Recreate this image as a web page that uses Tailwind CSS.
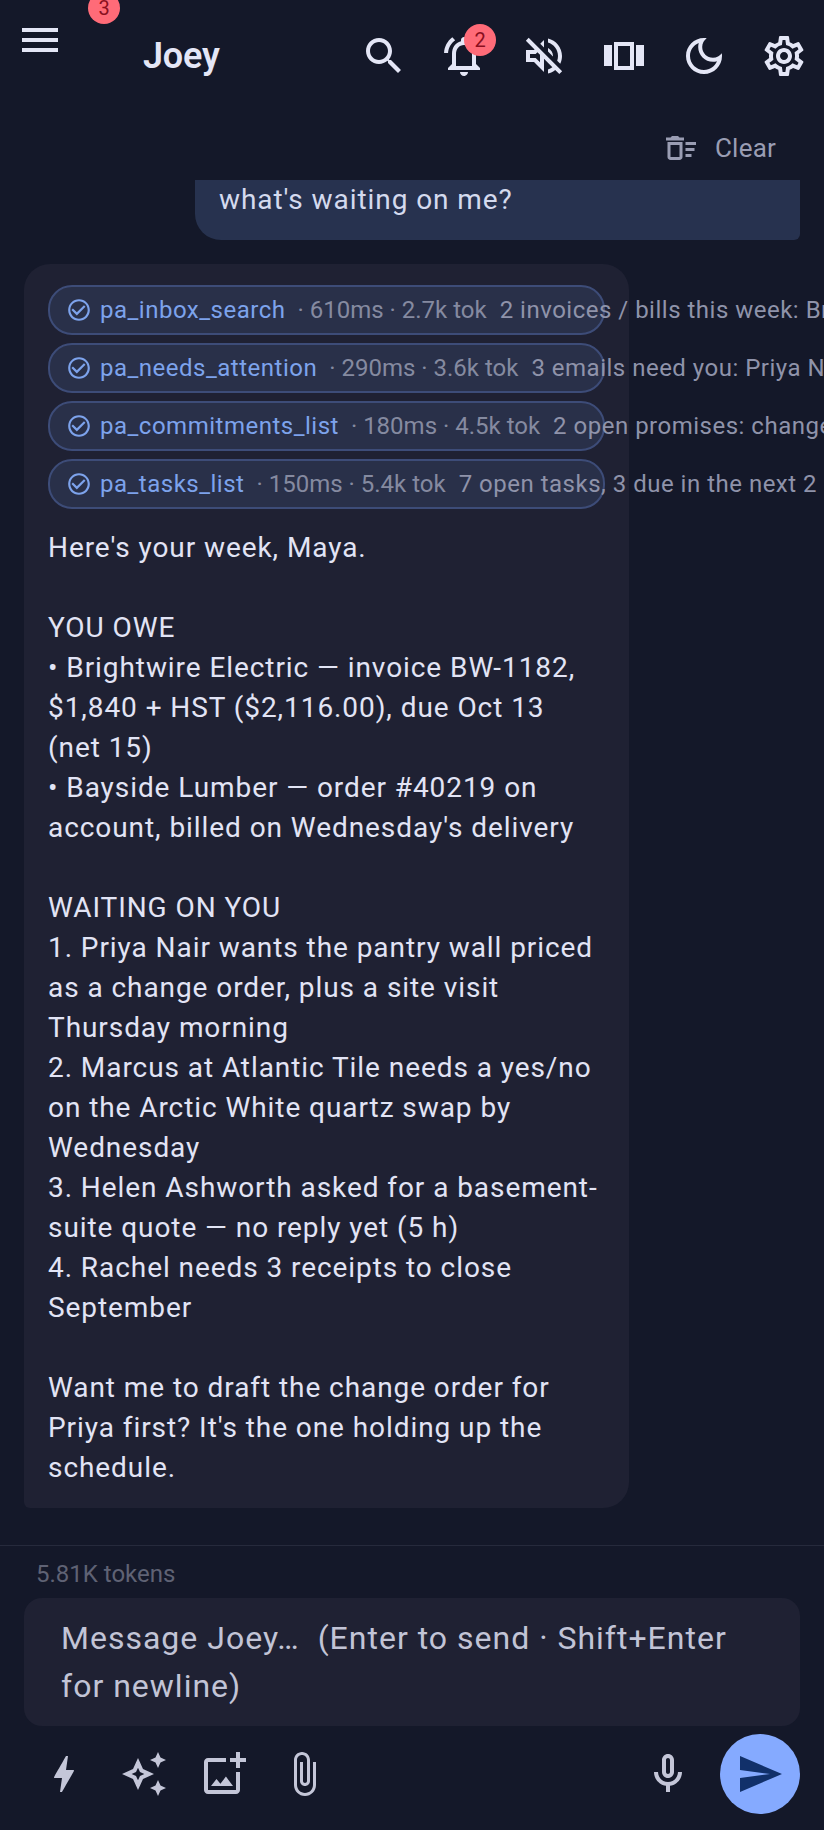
<!doctype html>
<html lang="en">
<head>
<meta charset="utf-8">
<script src="https://cdn.jsdelivr.net/npm/@tailwindcss/browser@4"></script>
</head>
<body class="bg-[#141829]">
<div class="relative w-[824px] h-[1830px] overflow-hidden bg-[#141829] flex flex-col font-['Roboto',sans-serif] text-[#e2e4f5]">

  <header class="relative h-[112px] shrink-0 flex items-start text-[#e4e6f6]">
    <button class="w-[80px] h-[80px] flex items-center justify-center">
      <svg class="w-12 h-12 fill-current" viewBox="0 0 24 24"><path d="M3 18h18v-2H3v2zm0-5h18v-2H3v2zm0-7v2h18V6H3z"/></svg>
    </button>
    <span class="absolute left-[88px] top-[-8px] w-[32px] h-[32px] rounded-full bg-[#ff6b78] text-[#8a0f1e] text-[20px] flex items-center justify-center">3</span>
    <div class="ml-[63px] h-[112px] flex items-center text-[36px] font-semibold tracking-[-0.2px]">Joey</div>
    <div class="ml-auto h-[112px] flex items-center">
      <button class="w-[80px] h-[80px] flex items-center justify-center">
        <svg class="w-12 h-12 fill-current" viewBox="0 0 24 24"><path d="M15.5 14h-.79l-.28-.27C15.41 12.59 16 11.11 16 9.5 16 5.91 13.09 3 9.5 3S3 5.91 3 9.5 5.91 16 9.5 16c1.61 0 3.09-.59 4.23-1.57l.27.28v.79l5 4.99L20.49 19l-4.99-5zm-6 0C7.01 14 5 11.99 5 9.5S7.01 5 9.5 5 14 7.01 14 9.5 11.99 14 9.5 14z"/></svg>
      </button>
      <button class="relative w-[80px] h-[80px] flex items-center justify-center">
        <svg class="w-12 h-12 fill-current" viewBox="0 0 24 24"><path d="M7.58 4.08L6.15 2.65C3.75 4.48 2.17 7.3 2.03 10.5h2c.15-2.65 1.51-4.97 3.55-6.42zm12.39 6.42h2c-.15-3.2-1.73-6.02-4.12-7.85l-1.42 1.43c2.02 1.45 3.39 3.77 3.54 6.42zM18 11c0-3.07-1.64-5.64-4.5-6.32V4c0-.83-.67-1.5-1.5-1.5s-1.5.67-1.5 1.5v.68C7.63 5.36 6 7.92 6 11v5l-2 2v1h16v-1l-2-2v-5zm-2 6H8v-6c0-2.48 1.51-4.5 4-4.5s4 2.02 4 4.5v6zm-4 5c.14 0 .27-.01.4-.04.65-.14 1.18-.58 1.44-1.18.1-.24.15-.5.15-.78h-4c.01 1.1.9 2 2.01 2z"/></svg>
        <span class="absolute left-[40px] top-[8px] w-[32px] h-[32px] rounded-full bg-[#ff6b78] text-[#8a0f1e] text-[20px] flex items-center justify-center">2</span>
      </button>
      <button class="w-[80px] h-[80px] flex items-center justify-center">
        <svg class="w-12 h-12 fill-current" viewBox="0 0 24 24"><path d="M4.34 2.93L2.93 4.34 7.29 8.7 7 9H3v6h4l5 5v-6.59l4.18 4.18c-.65.49-1.38.88-2.18 1.11v2.06c1.34-.3 2.57-.92 3.61-1.75l2.05 2.05 1.41-1.41L4.34 2.93zM10 15.17L7.83 13H5v-2h2.83l.88-.88L10 11.41v3.76zM19 12c0 .82-.15 1.61-.41 2.34l1.53 1.53c.56-1.17.88-2.48.88-3.87 0-4.28-2.99-7.86-7-8.77v2.06c2.89.86 5 3.54 5 6.71zm-7-8l-1.88 1.88L12 7.76zm4.5 8c0-1.77-1.02-3.29-2.5-4.03v1.79l2.48 2.48c.01-.08.02-.16.02-.24z"/></svg>
      </button>
      <button class="w-[80px] h-[80px] flex items-center justify-center">
        <svg class="w-12 h-12 fill-current" viewBox="0 0 48 48"><path d="M4 13h8v21H4zM36 13h8v21h-8zM14 10h20v28H14zM18 14v20h12V14z" fill-rule="evenodd"/></svg>
      </button>
      <button class="w-[80px] h-[80px] flex items-center justify-center">
        <svg class="w-12 h-12 fill-current" viewBox="0 0 24 24"><path d="M9.37 5.51C9.19 6.15 9.1 6.82 9.1 7.5c0 4.08 3.32 7.4 7.4 7.4.68 0 1.35-.09 1.99-.27C17.45 17.19 14.93 19 12 19c-3.86 0-7-3.14-7-7 0-2.93 1.81-5.45 4.37-6.49zM12 3c-4.97 0-9 4.03-9 9s4.03 9 9 9 9-4.03 9-9c0-.46-.04-.92-.1-1.36-.98 1.37-2.58 2.26-4.4 2.26-2.98 0-5.4-2.42-5.4-5.4 0-1.81.89-3.42 2.26-4.4-.44-.06-.9-.1-1.36-.1z"/></svg>
      </button>
      <button class="w-[80px] h-[80px] flex items-center justify-center">
        <svg class="w-12 h-12 fill-current" viewBox="0 0 24 24"><path d="M19.43 12.98c.04-.32.07-.64.07-.98 0-.34-.03-.66-.07-.98l2.11-1.65c.19-.15.24-.42.12-.64l-2-3.46c-.09-.16-.26-.25-.44-.25-.06 0-.12.01-.17.03l-2.49 1c-.52-.4-1.08-.73-1.69-.98l-.38-2.65C14.46 2.18 14.25 2 14 2h-4c-.25 0-.46.18-.49.42l-.38 2.65c-.61.25-1.17.59-1.69.98l-2.49-1c-.06-.02-.12-.03-.18-.03-.17 0-.34.09-.43.25l-2 3.46c-.13.22-.07.49.12.64l2.11 1.65c-.04.32-.07.65-.07.98 0 .33.03.66.07.98l-2.11 1.65c-.19.15-.24.42-.12.64l2 3.46c.09.16.26.25.44.25.06 0 .12-.01.17-.03l2.49-1c.52.4 1.08.73 1.69.98l.38 2.65c.03.24.24.42.49.42h4c.25 0 .46-.18.49-.42l.38-2.65c.61-.25 1.17-.59 1.69-.98l2.49 1c.06.02.12.03.18.03.17 0 .34-.09.43-.25l2-3.46c.12-.22.07-.49-.12-.64l-2.11-1.65zm-1.98-1.71c.04.31.05.52.05.73 0 .21-.02.43-.05.73l-.14 1.13.89.7 1.08.84-.7 1.21-1.27-.51-1.04-.42-.9.68c-.43.32-.84.56-1.25.73l-1.06.43-.16 1.13-.2 1.35h-1.4l-.19-1.35-.16-1.13-1.06-.43c-.43-.18-.83-.41-1.23-.71l-.91-.7-1.06.43-1.27.51-.7-1.21 1.08-.84.89-.7-.14-1.13c-.03-.31-.05-.54-.05-.74s.02-.43.05-.73l.14-1.13-.89-.7-1.08-.84.7-1.21 1.27.51 1.04.42.9-.68c.43-.32.84-.56 1.25-.73l1.06-.43.16-1.13.2-1.35h1.39l.19 1.35.16 1.13 1.06.43c.43.18.83.41 1.23.71l.91.7 1.06-.43 1.27-.51.7 1.21-1.07.85-.89.7.14 1.13zM12 8c-2.21 0-4 1.79-4 4s1.79 4 4 4 4-1.79 4-4-1.79-4-4-4zm0 6c-1.1 0-2-.9-2-2s.9-2 2-2 2 .9 2 2-.9 2-2 2z"/></svg>
      </button>
    </div>
  </header>

  <div class="h-[68px] shrink-0 flex items-start justify-end pr-[48px] pt-[18px] text-[#9a9db3]">
    <svg class="w-9 h-9 fill-current mr-[16px]" viewBox="0 0 24 24"><path d="M15 16h4v2h-4zm0-8h7v2h-7zm0 4h6v2h-6zM3 18c0 1.1.9 2 2 2h6c1.1 0 2-.9 2-2V8H3v10zm2-8h6v8H5v-8zm5-6H6L5 5H2v2h12V5h-3z"/></svg>
    <span class="text-[26px] leading-[36px] tracking-[0.2px]">Clear</span>
  </div>

  <main class="flex-1 min-h-0 overflow-hidden flex flex-col justify-end pl-[24px] pr-[24px] pb-[37px] border-b border-[#262a3c]">
    <div class="shrink-0 self-end w-[605px] h-[100px] bg-[#27324f] rounded-t-[26px] rounded-bl-[26px] rounded-br-[6px] pl-[24px] pt-[40px] text-[28px] leading-[40px] tracking-[0.93px] text-[#d4daee]">what's waiting on me?</div>

    <div class="shrink-0 mt-[24px] w-[605px] bg-[#1f2133] rounded-t-[26px] rounded-br-[26px] rounded-bl-[6px] px-[24px] pt-[21px] pb-[20px]">
      <div class="flex flex-col gap-[8px] mb-[19px] whitespace-pre">
        <div class="h-[50px] rounded-[24px] border-2 border-[#3d4c78] bg-[#293049] pl-[16px] flex items-center text-[24px]">
          <svg class="w-[26px] h-[26px] fill-[#7da3ec] shrink-0 mr-[8px]" viewBox="0 0 24 24"><path d="M16.59 7.58L10 14.17l-3.59-3.58L5 12l5 5 8-8zM12 2C6.48 2 2 6.48 2 12s4.48 10 10 10 10-4.48 10-10S17.52 2 12 2zm0 18c-4.42 0-8-3.58-8-8s3.58-8 8-8 8 3.58 8 8-3.58 8-8 8z"/></svg>
          <span class="text-[#7da3ec] tracking-[0.5px]">pa_inbox_search</span><span class="ml-[12px] text-[#858aa0]">· 610ms · 2.7k tok</span><span class="ml-[13px] text-[#8f93aa] tracking-[0.5px]">2 invoices / bills this week: Brightwire Electric</span>
        </div>
        <div class="h-[50px] rounded-[24px] border-2 border-[#3d4c78] bg-[#293049] pl-[16px] flex items-center text-[24px]">
          <svg class="w-[26px] h-[26px] fill-[#7da3ec] shrink-0 mr-[8px]" viewBox="0 0 24 24"><path d="M16.59 7.58L10 14.17l-3.59-3.58L5 12l5 5 8-8zM12 2C6.48 2 2 6.48 2 12s4.48 10 10 10 10-4.48 10-10S17.52 2 12 2zm0 18c-4.42 0-8-3.58-8-8s3.58-8 8-8 8 3.58 8 8-3.58 8-8 8z"/></svg>
          <span class="text-[#7da3ec] tracking-[0.5px]">pa_needs_attention</span><span class="ml-[12px] text-[#858aa0]">· 290ms · 3.6k tok</span><span class="ml-[13px] text-[#8f93aa] tracking-[0.5px]">3 emails need you: Priya Nair, Marcus</span>
        </div>
        <div class="h-[50px] rounded-[24px] border-2 border-[#3d4c78] bg-[#293049] pl-[16px] flex items-center text-[24px]">
          <svg class="w-[26px] h-[26px] fill-[#7da3ec] shrink-0 mr-[8px]" viewBox="0 0 24 24"><path d="M16.59 7.58L10 14.17l-3.59-3.58L5 12l5 5 8-8zM12 2C6.48 2 2 6.48 2 12s4.48 10 10 10 10-4.48 10-10S17.52 2 12 2zm0 18c-4.42 0-8-3.58-8-8s3.58-8 8-8 8 3.58 8 8-3.58 8-8 8z"/></svg>
          <span class="text-[#7da3ec] tracking-[0.5px]">pa_commitments_list</span><span class="ml-[12px] text-[#858aa0]">· 180ms · 4.5k tok</span><span class="ml-[13px] text-[#8f93aa] tracking-[0.5px]">2 open promises: change order</span>
        </div>
        <div class="h-[50px] rounded-[24px] border-2 border-[#3d4c78] bg-[#293049] pl-[16px] flex items-center text-[24px]">
          <svg class="w-[26px] h-[26px] fill-[#7da3ec] shrink-0 mr-[8px]" viewBox="0 0 24 24"><path d="M16.59 7.58L10 14.17l-3.59-3.58L5 12l5 5 8-8zM12 2C6.48 2 2 6.48 2 12s4.48 10 10 10 10-4.48 10-10S17.52 2 12 2zm0 18c-4.42 0-8-3.58-8-8s3.58-8 8-8 8 3.58 8 8-3.58 8-8 8z"/></svg>
          <span class="text-[#7da3ec] tracking-[0.5px]">pa_tasks_list</span><span class="ml-[12px] text-[#858aa0]">· 150ms · 5.4k tok</span><span class="ml-[13px] text-[#8f93aa] tracking-[0.5px]">7 open tasks, 3 due in the next 2 days</span>
        </div>
      </div>
      <div class="text-[28px] leading-[40px] tracking-[0.93px] text-[#e2e4f5] whitespace-pre-line">Here's your week, Maya.

YOU OWE
• Brightwire Electric — invoice BW-1182, $1,840 + HST ($2,116.00), due Oct 13 (net 15)
• Bayside Lumber — order #40219 on account, billed on Wednesday's delivery

WAITING ON YOU
1. Priya Nair wants the pantry wall priced as a change order, plus a site visit Thursday morning
2. Marcus at Atlantic Tile needs a yes/no on the Arctic White quartz swap by Wednesday
3. Helen Ashworth asked for a basement-suite quote — no reply yet (5 h)
4. Rachel needs 3 receipts to close September

Want me to draft the change order for Priya first? It's the one holding up the schedule.</div>
    </div>
  </main>

  <footer class="h-[284px] shrink-0 flex flex-col">
    <div class="h-[52px] pl-[36px] pt-[14px] text-[24px] leading-[28px] text-[#5f6274] shrink-0">5.81K tokens</div>
    <div class="mx-[24px] h-[128px] shrink-0 rounded-[18px] bg-[#1f2133] pl-[37px] pr-[37px] pt-[16px] text-[32px] leading-[48px] tracking-[1px] text-[#c2c4d6] whitespace-pre-wrap">Message Joey…  (Enter to send · Shift+Enter for newline)</div>
    <div class="mt-[8px] pl-[24px] pr-[24px] flex items-center h-[80px] text-[#c4c6d8]">
      <button class="w-[80px] h-[80px] flex items-center justify-center"><svg class="w-12 h-12 fill-current" viewBox="0 0 24 24"><path d="M11 21h-1l1-7H7.5c-.58 0-.57-.32-.38-.66.19-.34.05-.08.07-.12C8.48 10.94 10.42 7.54 13 3h1l-1 7h3.5c.49 0 .56.33.47.51l-.07.15C12.96 17.55 11 21 11 21z"/></svg></button>
      <button class="w-[80px] h-[80px] flex items-center justify-center"><svg class="w-12 h-12 fill-current" viewBox="0 0 24 24"><path d="M19 9l1.25-2.75L23 5l-2.75-1.25L19 1l-1.25 2.75L15 5l2.75 1.25L19 9zm0 6l-1.25 2.75L15 19l2.75 1.25L19 23l1.25-2.75L23 19l-2.75-1.25L19 15zm-7.5-5.5L9 4 6.5 9.5 1 12l5.5 2.5L9 20l2.5-5.5L17 12l-5.5-2.5zm-1.51 3.49L9 15.17l-.99-2.18L5.83 12l2.18-.99L9 8.83l.99 2.18 2.18.99-2.18.99z"/></svg></button>
      <button class="w-[80px] h-[80px] flex items-center justify-center"><svg class="w-12 h-12 fill-current" viewBox="0 0 24 24"><path d="M18 20H4V6h9V4H4c-1.1 0-2 .9-2 2v14c0 1.1.9 2 2 2h14c1.1 0 2-.9 2-2v-9h-2v9zm-7.79-3.17l-1.96-2.36L5.5 18h11l-3.54-4.71zM20 4V1h-2v3h-3c.01.01 0 2 0 2h3v2.99c.01.01 2 0 2 0V6h3V4h-3z"/></svg></button>
      <button class="w-[80px] h-[80px] flex items-center justify-center"><svg class="w-12 h-12 fill-current" viewBox="0 0 24 24"><path d="M16.5 6v11.5c0 2.21-1.79 4-4 4s-4-1.79-4-4V5c0-1.38 1.12-2.5 2.5-2.5s2.5 1.12 2.5 2.5v10.5c0 .55-.45 1-1 1s-1-.45-1-1V6H10v9.5c0 1.38 1.12 2.5 2.5 2.5s2.5-1.12 2.5-2.5V5c0-2.21-1.79-4-4-4S7 2.79 7 5v12.5c0 3.04 2.46 5.5 5.5 5.5s5.5-2.46 5.5-5.5V6h-1.5z"/></svg></button>
      <button class="ml-auto w-[80px] h-[80px] flex items-center justify-center"><svg class="w-12 h-12 fill-current" viewBox="0 0 24 24"><path d="M12 14c1.66 0 3-1.34 3-3V5c0-1.66-1.34-3-3-3S9 3.34 9 5v6c0 1.66 1.34 3 3 3zm-1-9c0-.55.45-1 1-1s1 .45 1 1v6c0 .55-.45 1-1 1s-1-.45-1-1V5zm6 6c0 2.76-2.24 5-5 5s-5-2.24-5-5H5c0 3.53 2.61 6.43 6 6.92V21h2v-3.08c3.39-.49 6-3.39 6-6.92h-2z"/></svg></button>
      <button class="ml-[12px] w-[80px] h-[80px] rounded-full bg-[#85aaff] flex items-center justify-center text-[#11306a]"><svg class="w-12 h-12 fill-current" viewBox="0 0 24 24"><path d="M2.01 21L23 12 2.01 3 2 10l15 2-15 2z"/></svg></button>
    </div>
  </footer>
</div>
</body>
</html>
